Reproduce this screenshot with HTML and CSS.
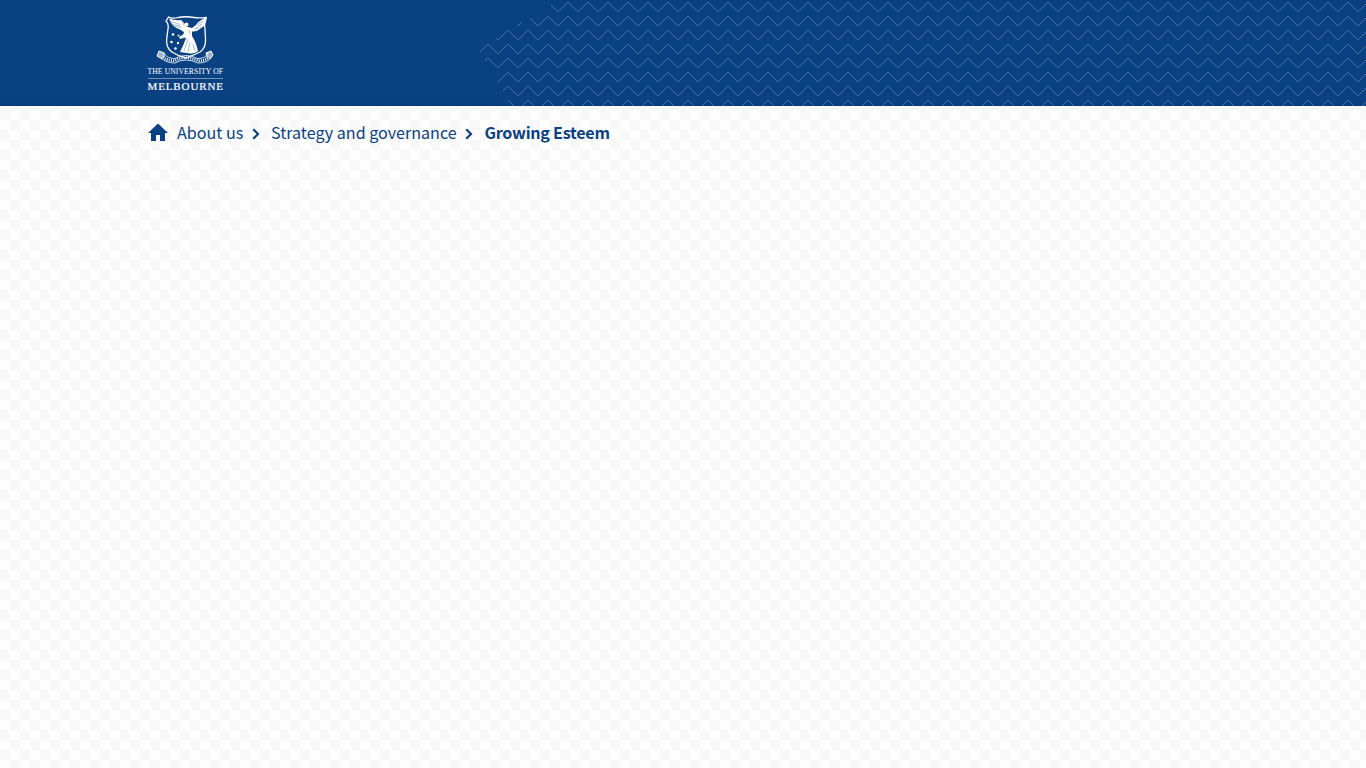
FILE: index.html
```html
<!DOCTYPE html>
<html lang="en">
<head>
<meta charset="utf-8">
<title>Growing Esteem</title>
<link rel="stylesheet" href="styles.css">
</head>
<body>
<header class="header">
  <svg class="waves" width="1366" height="106" viewBox="0 0 1366 106" aria-hidden="true">
    <defs>
      <pattern id="wave" width="20" height="14" patternUnits="userSpaceOnUse"><path d="M-2.5 11.5h1L7.5 2.5h1l9 9h1l9-9" fill="none" stroke="#4a77a6" stroke-width=".9"/></pattern>
    </defs>
    <path fill="url(#wave)" d="M551 0H1366V14H551zM530 14H1366V28H530zM517 22h5v6h-5zM496 28H1366V42H496zM480 42H1366V56H480zM485 56H1366V70H485zM497 70H1366V84H497zM503 84H1366V98H503zM508 98H1366V106H508z"/>
  </svg>
  <a class="logo" href="#" aria-label="The University of Melbourne">
    <svg width="92" height="90" viewBox="0 0 92 90">
      <g fill="none" stroke="#fff" stroke-linecap="round" stroke-linejoin="round">
        <path stroke-width="1.300" d="M28.500 9Q33 11 38 9.500Q46 8 54 9.500Q59 10.500 66 9.300Q64 14 65 21C65 30 68 38 60 44Q54 47 46 50Q38 48 32 44C24 38 27 30 28 21Q29 16 26 13z"/>
        <path stroke-width=".8" d="M24 45Q27 51 35 50.500Q40 47.500 46 47.500Q52 47.500 57 50.500Q66 51 68 45M21 50Q26 55 35 55Q40 52 46 52Q52 52 58 55Q67 55 71 50"/>
        <path stroke-width="2.600" stroke-dasharray="1 1.200" stroke-linecap="butt" d="M23 49Q28 53 35 52.800Q40 49.800 46 49.800Q52 49.800 58 52.800Q65 53 69 49"/>
        <path stroke-width="1" fill="#fff" fill-opacity=".6" d="M22 51l-5-3 2-5 5 2v4M70 51l3-4-2-4-5 2 1 4"/>
      </g>
      <g fill="#fff">
        <path d="M29 10.500Q36 13 41 12Q45 15 45.500 18L48 19 52 20 56 17Q58 13 67 9Q66 18 61 20Q57 24 52 23.500L52 28Q56 34 58 43Q54 46 50 45.500L40 44Q44 36 46 30L43 28 44 24 39 21Q32 19 29 10.500z"/>
        <circle cx="46.500" cy="16.500" r="1.900"/>
        <path d="M44 26l-5 3 1 2 7-2z"/>
        <circle cx="33" cy="26.500" r="1.300"/><circle cx="38.500" cy="27.500" r="1"/><circle cx="31.500" cy="34" r="1.300"/><circle cx="38" cy="35" r="1.200"/><circle cx="35.500" cy="40.500" r="1.300"/>
      </g>
      <path d="M31 13.500l9 3M33 16.500l7 1.500M35 18.500l7 1M63 13l-6 4M62 16l-6 4M59 20l-5 1M48 31l-4 12M50 34l-2 10M53 36l2 7M42 13l2 4M49 22l1 4" fill="none" stroke="#86a4c5" stroke-width=".7"/>
      <text class="logo-text" x="7.500" y="66.300" font-size="7.600" textLength="75.500">THE UNIVERSITY OF</text>
      <path d="M8 70.500h75" stroke="#8ba8c7" stroke-width=".8"/>
      <text class="logo-text logo-name" x="7.500" y="82.300" font-size="11" textLength="75.500">MELBOURNE</text>
    </svg>
  </a>
</header>
<nav class="breadcrumb" aria-label="Breadcrumb">
  <a class="home" href="#" aria-label="Home"><svg width="20" height="18" viewBox="0 0 20 18"><path fill="#094183" d="M8 18v-6h4v6h5v-8h3L10 .5 0 10h3v8z"/></svg></a>
  <a class="about" href="#">About us</a>
  <svg class="chevron" width="8" height="12" viewBox="0 0 8 12"><path d="M1.200 1.200L6 6 1.200 10.800"/></svg>
  <a class="strategy" href="#">Strategy and governance</a>
  <svg class="chevron" width="8" height="12" viewBox="0 0 8 12"><path d="M1.200 1.200L6 6 1.200 10.800"/></svg>
  <a class="current" href="#">Growing Esteem</a>
</nav>
</body>
</html>
```
FILE: styles.css
```css
body {
  margin: 0;
  min-height: 100vh;
  background: repeating-conic-gradient(#fdfdfd 0 25%, #f8f8f8 0 50%) 10px 0 / 20px 20px;
  font-family: "Noto Sans CJK SC", "Noto Sans", sans-serif;
  color: #094183;
}
.header {
  position: relative;
  box-sizing: border-box;
  height: 106px;
  padding: 8px 0 0 140px;
  overflow: hidden;
  background: linear-gradient(#094183 102px, #083c79 106px);
}
.waves { position: absolute; top: 0; left: 0; }
.logo { position: relative; display: block; width: 92px; height: 90px; }
.logo svg { display: block; }
.logo-text { fill: #fff; font-family: "Liberation Serif", serif; }
.logo-name { stroke: #fff; stroke-width: .2px; }
.breadcrumb {
  display: flex;
  align-items: center;
  height: 52px;
  padding-left: 148px;
  font-size: 16.1px;
  line-height: 24px;
}
.breadcrumb a { color: inherit; text-decoration: none; white-space: nowrap; }
.home { width: 20px; height: 18px; margin: 0 9px 1px 0; }
.home svg { display: block; }
.about { width: 75px; }
.strategy { width: 194px; }
.chevron { width: 8px; margin-right: 11px; margin-top: 3px; fill: none; stroke: #094183; stroke-width: 2.2; }
.breadcrumb .current { margin-left: .5px; font-weight: 700; letter-spacing: -.26px; }
```
